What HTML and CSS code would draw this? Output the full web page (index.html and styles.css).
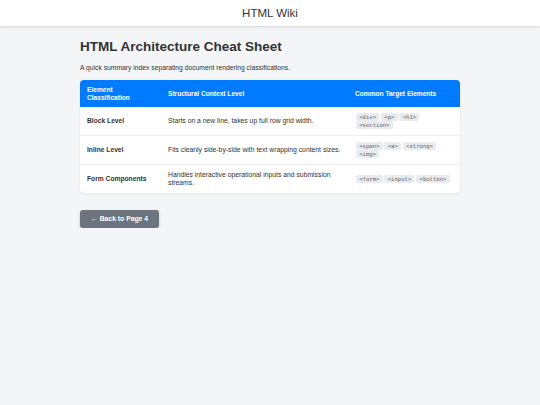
FILE: index.html
```html
<!DOCTYPE html>
<html lang="en">
<head>
    <meta charset="UTF-8">
    <meta name="viewport" content="width=device-width, initial-scale=1.0">
    <title>HTML Wiki</title>
    <link rel="stylesheet" href="styles.css">
</head>
<body>
    <header class="site-header">HTML Wiki</header>

    <main class="content">
        <h1>HTML Architecture Cheat Sheet</h1>
        <p class="lead">A quick summary index separating document rendering classifications.</p>

        <table class="cheat-table">
            <thead>
                <tr>
                    <th class="col-name">Element Classification</th>
                    <th class="col-desc">Structural Context Level</th>
                    <th class="col-tags">Common Target Elements</th>
                </tr>
            </thead>
            <tbody>
                <tr>
                    <td class="name">Block Level</td>
                    <td>Starts on a new line, takes up full row grid width.</td>
                    <td class="tags"><code>&lt;div&gt;</code> <code>&lt;p&gt;</code> <code>&lt;h1&gt;</code> <code>&lt;section&gt;</code></td>
                </tr>
                <tr>
                    <td class="name">Inline Level</td>
                    <td>Fits cleanly side-by-side with text wrapping content sizes.</td>
                    <td class="tags"><code>&lt;span&gt;</code> <code>&lt;a&gt;</code> <code>&lt;strong&gt;</code> <code>&lt;img&gt;</code></td>
                </tr>
                <tr>
                    <td class="name">Form Components</td>
                    <td>Handles interactive operational inputs and submission streams.</td>
                    <td class="tags"><code>&lt;form&gt;</code> <code>&lt;input&gt;</code> <code>&lt;button&gt;</code></td>
                </tr>
            </tbody>
        </table>

        <a class="back-btn" href="#">&larr; Back to Page 4</a>
    </main>
</body>
</html>
```

FILE: styles.css
```css
body {
    margin: 0;
    font-family: "Liberation Sans", Arial, sans-serif;
    background: #f4f5f7;
    color: #333;
}
.site-header {
    background: #fff;
    height: 26px;
    line-height: 26px;
    text-align: center;
    font-size: 11.5px;
    color: #333;
    box-shadow: 0 1px 3px rgba(0, 0, 0, 0.12);
}
.content {
    width: 380px;
    margin: 0 auto;
    padding-top: 13px;
}
h1 {
    font-size: 13.5px;
    margin: 0 0 10px;
    color: #333;
}
.lead {
    font-size: 6.75px;
    margin: 0 0 9px;
    color: #333;
}
.cheat-table {
    width: 100%;
    table-layout: fixed;
    border-collapse: collapse;
    background: #fff;
    border-radius: 4px;
    overflow: hidden;
    box-shadow: 0 1px 3px rgba(0, 0, 0, 0.08);
    font-size: 6.8px;
    line-height: 8px;
}
.cheat-table th {
    background: #007bff;
    color: #fff;
    text-align: left;
    font-weight: bold;
    font-size: 6.6px;
    padding: 5.5px 4px 5.5px 7px;
}
.col-name { width: 70px; }
.col-desc { width: 175px; }
.cheat-table td {
    padding: 6px 4px 6px 7px;
    height: 16px;
    border-top: 1px solid #eee;
    vertical-align: middle;
    color: #333;
}
.cheat-table tbody tr:first-child td { border-top: none; }
.cheat-table td.name {
    font-weight: bold;
    font-size: 6.7px;
}
.cheat-table th.col-tags { padding-left: 8px; }
.cheat-table td.tags {
    line-height: 8.5px;
    padding: 5.5px 6px 5.5px 9px;
}
code {
    font-family: "DejaVu Sans Mono", monospace;
    font-size: 5.6px;
    background: #e9ecef;
    color: #666;
    padding: 0 3.2px;
    border-radius: 2px;
    line-height: 8px;
    display: inline-block;
    vertical-align: top;
}
.back-btn {
    display: inline-block;
    margin-top: 17px;
    background: #6c757d;
    color: #fff;
    text-decoration: none;
    font-size: 6.8px;
    font-weight: bold;
    line-height: 8px;
    padding: 5px 11px;
    border-radius: 3px;
    box-shadow: 0 1px 3px rgba(0, 0, 0, 0.2);
}
```
